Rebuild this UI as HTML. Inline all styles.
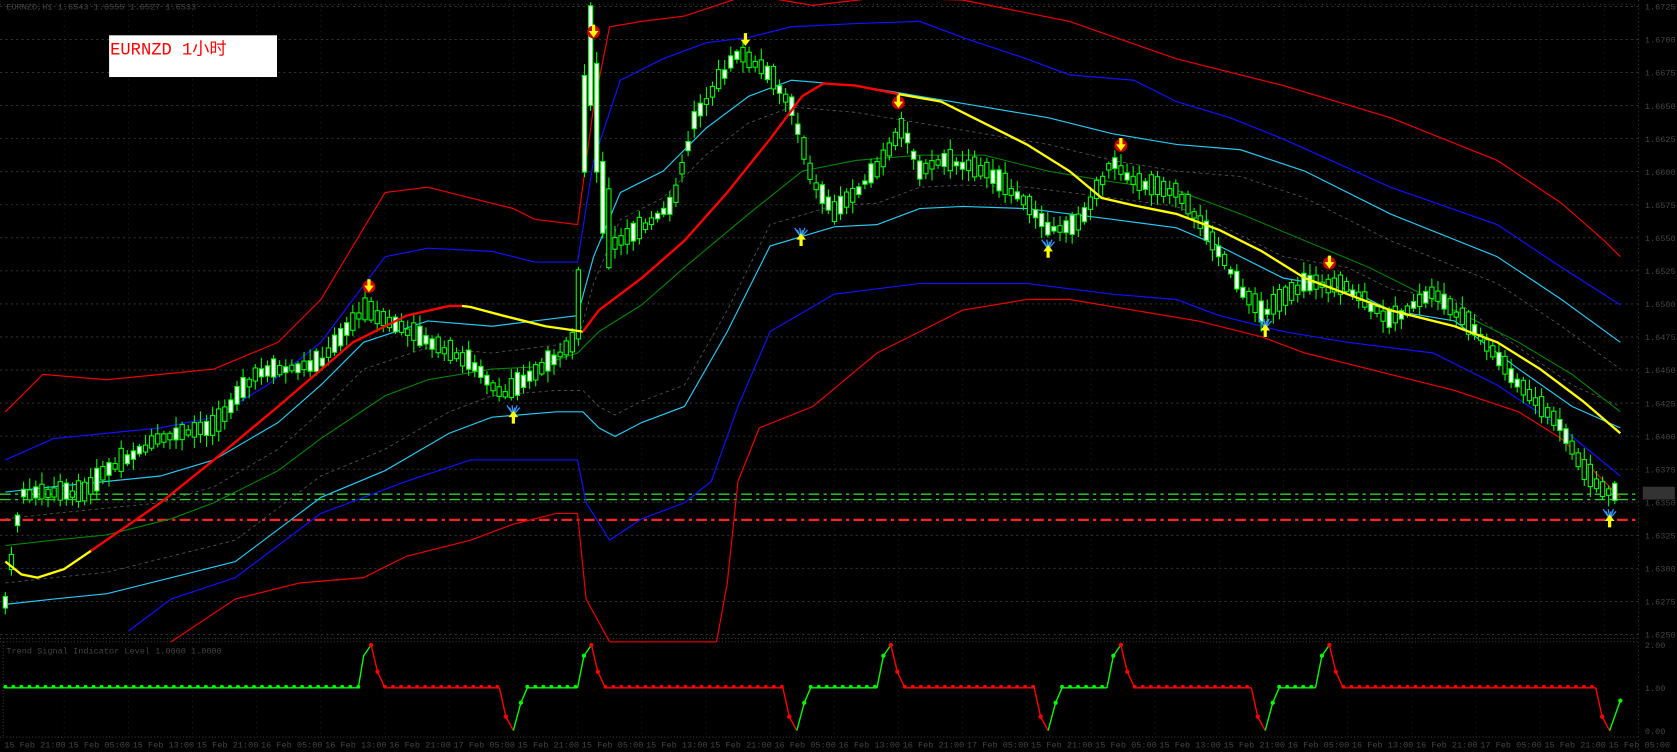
<!DOCTYPE html>
<html><head><meta charset="utf-8"><style>
html,body{margin:0;padding:0;background:#000;overflow:hidden}
svg{display:block}
</style></head><body>
<svg id="c" xmlns="http://www.w3.org/2000/svg" width="1677" height="752" viewBox="0 0 1568 703" preserveAspectRatio="none">
<rect width="1568" height="703" fill="#000"/>
<g id="grid"></g>
<g id="bands"></g>
<g id="candles"></g>
<g id="ma"></g>
<g id="sig"></g>
<g id="sub"></g>
<text x="6" y="9" fill="#444" font-family="Liberation Mono, monospace" font-size="8">EURNZD,H1  1.6543 1.6555 1.6527 1.6533</text>
<text x="6" y="611" fill="#444" font-family="Liberation Mono, monospace" font-size="8">Trend Signal Indicator Level 1.0000 1.0000</text>
<rect x="102" y="33" width="157" height="39" fill="#fff"/>
<text x="103" y="51" fill="#f00" font-family="Liberation Mono, 'Noto Sans CJK SC', monospace" font-size="16">EURNZD 1小时</text>
</svg>
<script>
(function(){
var NS="http://www.w3.org/2000/svg";
function el(p,t,a){var e=document.createElementNS(NS,t);for(var k in a)e.setAttribute(k,a[k]);document.getElementById(p).appendChild(e);return e;}
function pl(p,pts,c,w,d){var s=pts.map(function(q){return q[0]+","+q[1]}).join(" ");var a={points:s,fill:"none",stroke:c,"stroke-width":w};if(d)a["stroke-dasharray"]=d;return el(p,"polyline",a);}
function interp(pts,x){for(var i=0;i<pts.length-1;i++){if(x>=pts[i][0]&&x<=pts[i+1][0]){var t=(x-pts[i][0])/(pts[i+1][0]-pts[i][0]);return pts[i][1]+t*(pts[i+1][1]-pts[i][1]);}}return pts[pts.length-1][1];}
for(var k=0;k<20;k++){var y=6+30.9*k;if(y>596)break;pl("grid",[[0,y],[1532,y]],"#3a3a3a",0.8,"2,3");
el("grid","text",{x:1538,y:y+3,fill:"#444","font-family":"Liberation Mono, monospace","font-size":"8"}).textContent=(1.6725-k*0.0025).toFixed(4);}
for(var x=60;x<1532;x+=60){pl("grid",[[x,4],[x,596]],"#222",0.8,"1,4");pl("grid",[[x,600],[x,688]],"#222",0.8,"1,4");}
pl("grid",[[1532,0],[1532,703]],"#444",0.8,"1,3");
pl("grid",[[0,4],[1532,4]],"#444",0.8,"1,3");
pl("grid",[[0,597],[1532,597]],"#444",0.8,"1,2");pl("grid",[[0,600],[1532,600]],"#444",0.8,"1,2");
pl("grid",[[3,600],[3,689]],"#444",0.8,"1,2");pl("grid",[[0,689],[1532,689]],"#444",0.8,"1,2");
var tl=["15 Feb 21:00","15 Feb 05:00","15 Feb 13:00","15 Feb 21:00","16 Feb 05:00","16 Feb 13:00","16 Feb 21:00","17 Feb 05:00"];
for(var i=0;i<26;i++){el("grid","text",{x:4+i*60,y:699,fill:"#444","font-family":"Liberation Mono, monospace","font-size":"8"}).textContent=tl[i%8];}
el("grid","text",{x:1538,y:606,fill:"#444","font-family":"Liberation Mono, monospace","font-size":"8"}).textContent="2.00";
el("grid","text",{x:1538,y:646,fill:"#444","font-family":"Liberation Mono, monospace","font-size":"8"}).textContent="1.00";
el("grid","text",{x:1538,y:686,fill:"#444","font-family":"Liberation Mono, monospace","font-size":"8"}).textContent="0.00";
pl("grid",[[0,462],[1532,462]],"#3c3",1.3,"10,4,3,4");pl("grid",[[0,467],[1532,467]],"#3c3",1.3,"10,4,3,4");
pl("grid",[[0,486],[1532,486]],"#f22",2,"10,4,3,4");
el("grid","rect",{x:1536,y:455,width:30,height:12,fill:"#333"});
var redU=[[5,385],[40,350],[100,355],[150,350],[200,345],[260,320],[300,280],[330,230],[360,180],[400,175],[440,185],[480,195],[500,205],[540,210],[555,100],[570,25],[600,20],[640,15],[700,-5],[760,5],[820,-2],[900,0],[1000,20],[1100,55],[1200,80],[1300,110],[1400,150],[1460,190],[1500,225],[1515,240]];
var bluU=[[5,430],[50,410],[100,405],[150,400],[200,390],[250,360],[300,320],[330,280],[360,240],[400,232],[460,235],[500,245],[540,245],[555,150],[580,75],[620,55],[660,40],[700,35],[740,25],[800,22],[860,20],[900,35],[960,55],[1000,70],[1060,75],[1100,95],[1150,110],[1200,130],[1300,175],[1400,210],[1460,250],[1515,285]];
var cyU=[[5,460],[50,455],[100,450],[150,445],[200,430],[260,395],[300,360],[340,320],[400,300],[460,305],[500,300],[540,295],[555,240],[580,180],[620,160],[660,120],[700,90],[740,75],[800,80],[860,90],[920,100],[980,110],[1040,125],[1100,135],[1160,140],[1220,160],[1300,200],[1400,240],[1460,280],[1515,320]];
var grM=[[5,510],[50,505],[100,500],[160,485],[200,470],[260,440],[300,410],[360,370],[400,355],[460,345],[500,343],[540,330],[560,310],[600,285],[640,250],[700,200],[750,160],[800,150],[860,145],[920,145],[980,160],[1040,170],[1100,178],[1160,200],[1220,225],[1280,250],[1360,290],[1420,320],[1470,350],[1515,385]];
var cyL=[[5,565],[50,560],[100,555],[160,540],[220,525],[300,465],[360,440],[420,405],[460,390],[520,385],[545,385],[560,400],[575,408],[600,395],[640,380],[680,310],[720,230],[780,212],[820,210],[860,195],[900,193],[960,195],[1000,200],[1040,205],[1100,213],[1140,230],[1200,260],[1260,270],[1300,290],[1360,300],[1420,345],[1470,380],[1515,400]];
var bluL=[[120,590],[160,560],[220,540],[300,480],[380,450],[440,430],[500,430],[540,430],[548,470],[570,505],[600,485],[640,470],[665,450],[690,380],[720,310],[780,275],[860,265],[960,265],[1040,275],[1100,280],[1140,295],[1200,310],[1260,320],[1340,330],[1400,360],[1460,400],[1515,445]];
var redL=[[160,600],[220,560],[280,545],[340,540],[380,520],[440,505],[480,490],[520,480],[540,480],[548,560],[570,600],[670,600],[680,545],[690,450],[710,400],[760,380],[820,330],[860,310],[900,290],[960,280],[1000,280],[1060,290],[1120,300],[1180,315],[1220,330],[1260,340],[1300,350],[1360,365],[1420,385],[1460,410],[1500,450],[1515,465]];
var gU=cyU.map(function(p){return [p[0],p[1]+25]}),gL=cyL.map(function(p){return [p[0],p[1]-20]});
pl("bands",gU,"#555",0.8,"3,3");pl("bands",gL,"#555",0.8,"3,3");
pl("bands",redU,"#e00",1.1);pl("bands",bluU,"#11f",1.1);pl("bands",cyU,"#29c8f0",1.1);
pl("bands",grM,"#080",1);pl("bands",cyL,"#29c8f0",1.1);pl("bands",bluL,"#11f",1.1);pl("bands",redL,"#e00",1.1);
var path=[[5,565],[20,462],[80,462],[100,440],[150,410],[200,400],[240,350],[300,340],[340,290],[360,300],[400,320],[440,340],[470,370],[500,350],[540,320],[548,90],[555,60],[560,180],[570,230],[600,215],[630,190],[650,110],[690,50],[720,70],[740,100],[760,170],[780,200],[820,160],[845,120],[860,160],[880,150],[920,160],[960,190],[980,215],[1010,210],[1040,150],[1060,170],[1100,180],[1130,220],[1160,270],[1180,295],[1220,265],[1260,270],[1300,300],[1340,275],[1380,310],[1420,360],[1460,400],[1480,440],[1500,460],[1512,462]];
var seed=7;function rnd(){seed=(seed*9301+49297)%233280;return seed/233280;}
for(var cx=5;cx<=1512;cx+=5.7){var c=interp(path,cx);var h=2+rnd()*11;if(cx>540&&cx<570)h=40+rnd()*40;var up=rnd()<0.55;
var bt=c-h,bb=c+h*0.4+rnd()*4;var wt=bt-2-rnd()*9,wb=bb+2+rnd()*9;
el("candles","line",{x1:cx,y1:wt,x2:cx,y2:wb,stroke:"#0f0","stroke-width":1});
el("candles","rect",{x:cx-2,y:bt,width:4,height:Math.max(1,bb-bt),fill:up?"#000":"#fff",stroke:"#0f0","stroke-width":1});}
pl("ma",[[5,525],[20,537],[35,540],[60,532],[85,515]],"#ff0",2.2);
pl("ma",[[85,515],[150,470],[200,430],[260,380],[330,320],[380,295],[420,286],[432,286]],"#f00",2.2);
pl("ma",[[432,286],[440,287],[470,295],[510,305],[545,310]],"#ff0",2.2);
pl("ma",[[545,310],[560,290],[600,260],[640,225],[680,180],[720,130],[750,90],[770,78],[800,80],[840,88]],"#f00",2.2);
pl("ma",[[840,88],[880,95],[920,115],[960,135],[1000,160],[1030,185],[1060,192],[1100,200],[1140,215],[1180,235],[1220,260],[1260,275],[1300,290],[1360,305],[1400,320],[1440,345],[1480,375],[1515,405]],"#ff0",2.2);
function down(x,y,circ){if(circ)el("sig","circle",{cx:x,cy:y,r:6,fill:"#c00"});
el("sig","path",{d:"M"+(x-1.5)+","+(y-7)+"h3v6h3l-4.5,6l-4.5,-6h3z",fill:"#ff0"});}
function upA(x,y){for(var i=0;i<6;i++)el("sig","line",{x1:x,y1:y,x2:x-6+i*2.4,y2:y-9+(i%2)*2,stroke:"#39f","stroke-width":1.2});
el("sig","path",{d:"M"+(x-1.5)+","+(y+8)+"h3v-6h3l-4.5,-6l-4.5,6h3z",fill:"#ff0"});}
down(555,30,1);down(345,268,1);down(840,96,1);down(1048,136,1);down(1243,246,1);down(697,38,0);
upA(480,388);upA(749,222);upA(980,233);upA(1183,307);upA(1505,485);
var peaks=[347,553,833,1048,1243],troughs=[480,745,980,1183,1505];
var B=643,P=603,T=683;
function dots(x1,x2,col){for(var x=x1;x<=x2;x+=7.5)el("sub","circle",{cx:x,cy:B-1,r:1.8,fill:col});pl("sub",[[x1,B],[x2,B]],col,1.3);}
dots(5,335,"#0f0");
pl("sub",[[335,B],[340,613],[347,P]],"#0f0",1.3);
for(var i=0;i<peaks.length;i++){var p=peaks[i],t=troughs[i];
pl("sub",[[p,P],[p+6,628],[p+13,B]],"#f00",1.3);el("sub","circle",{cx:p,cy:P,r:2,fill:"#f00"});el("sub","circle",{cx:p+6,cy:628,r:2,fill:"#f00"});
dots(p+13,t-13,"#f00");
pl("sub",[[t-13,B],[t-7,670],[t,T]],"#f00",1.3);el("sub","circle",{cx:t-7,cy:670,r:2,fill:"#f00"});
if(i<peaks.length-1){var np=peaks[i+1];
pl("sub",[[t,T],[t+7,657],[t+13,B]],"#0f0",1.3);el("sub","circle",{cx:t+7,cy:657,r:2,fill:"#0f0"});
dots(t+13,np-13,"#0f0");
pl("sub",[[np-13,B],[np-7,613],[np,P]],"#0f0",1.3);el("sub","circle",{cx:np-7,cy:613,r:2,fill:"#0f0"});}
else{pl("sub",[[t,T],[t+10,655]],"#0f0",1.3);el("sub","circle",{cx:t+10,cy:655,r:2,fill:"#0f0"});}}
})();
</script>
</body></html>
